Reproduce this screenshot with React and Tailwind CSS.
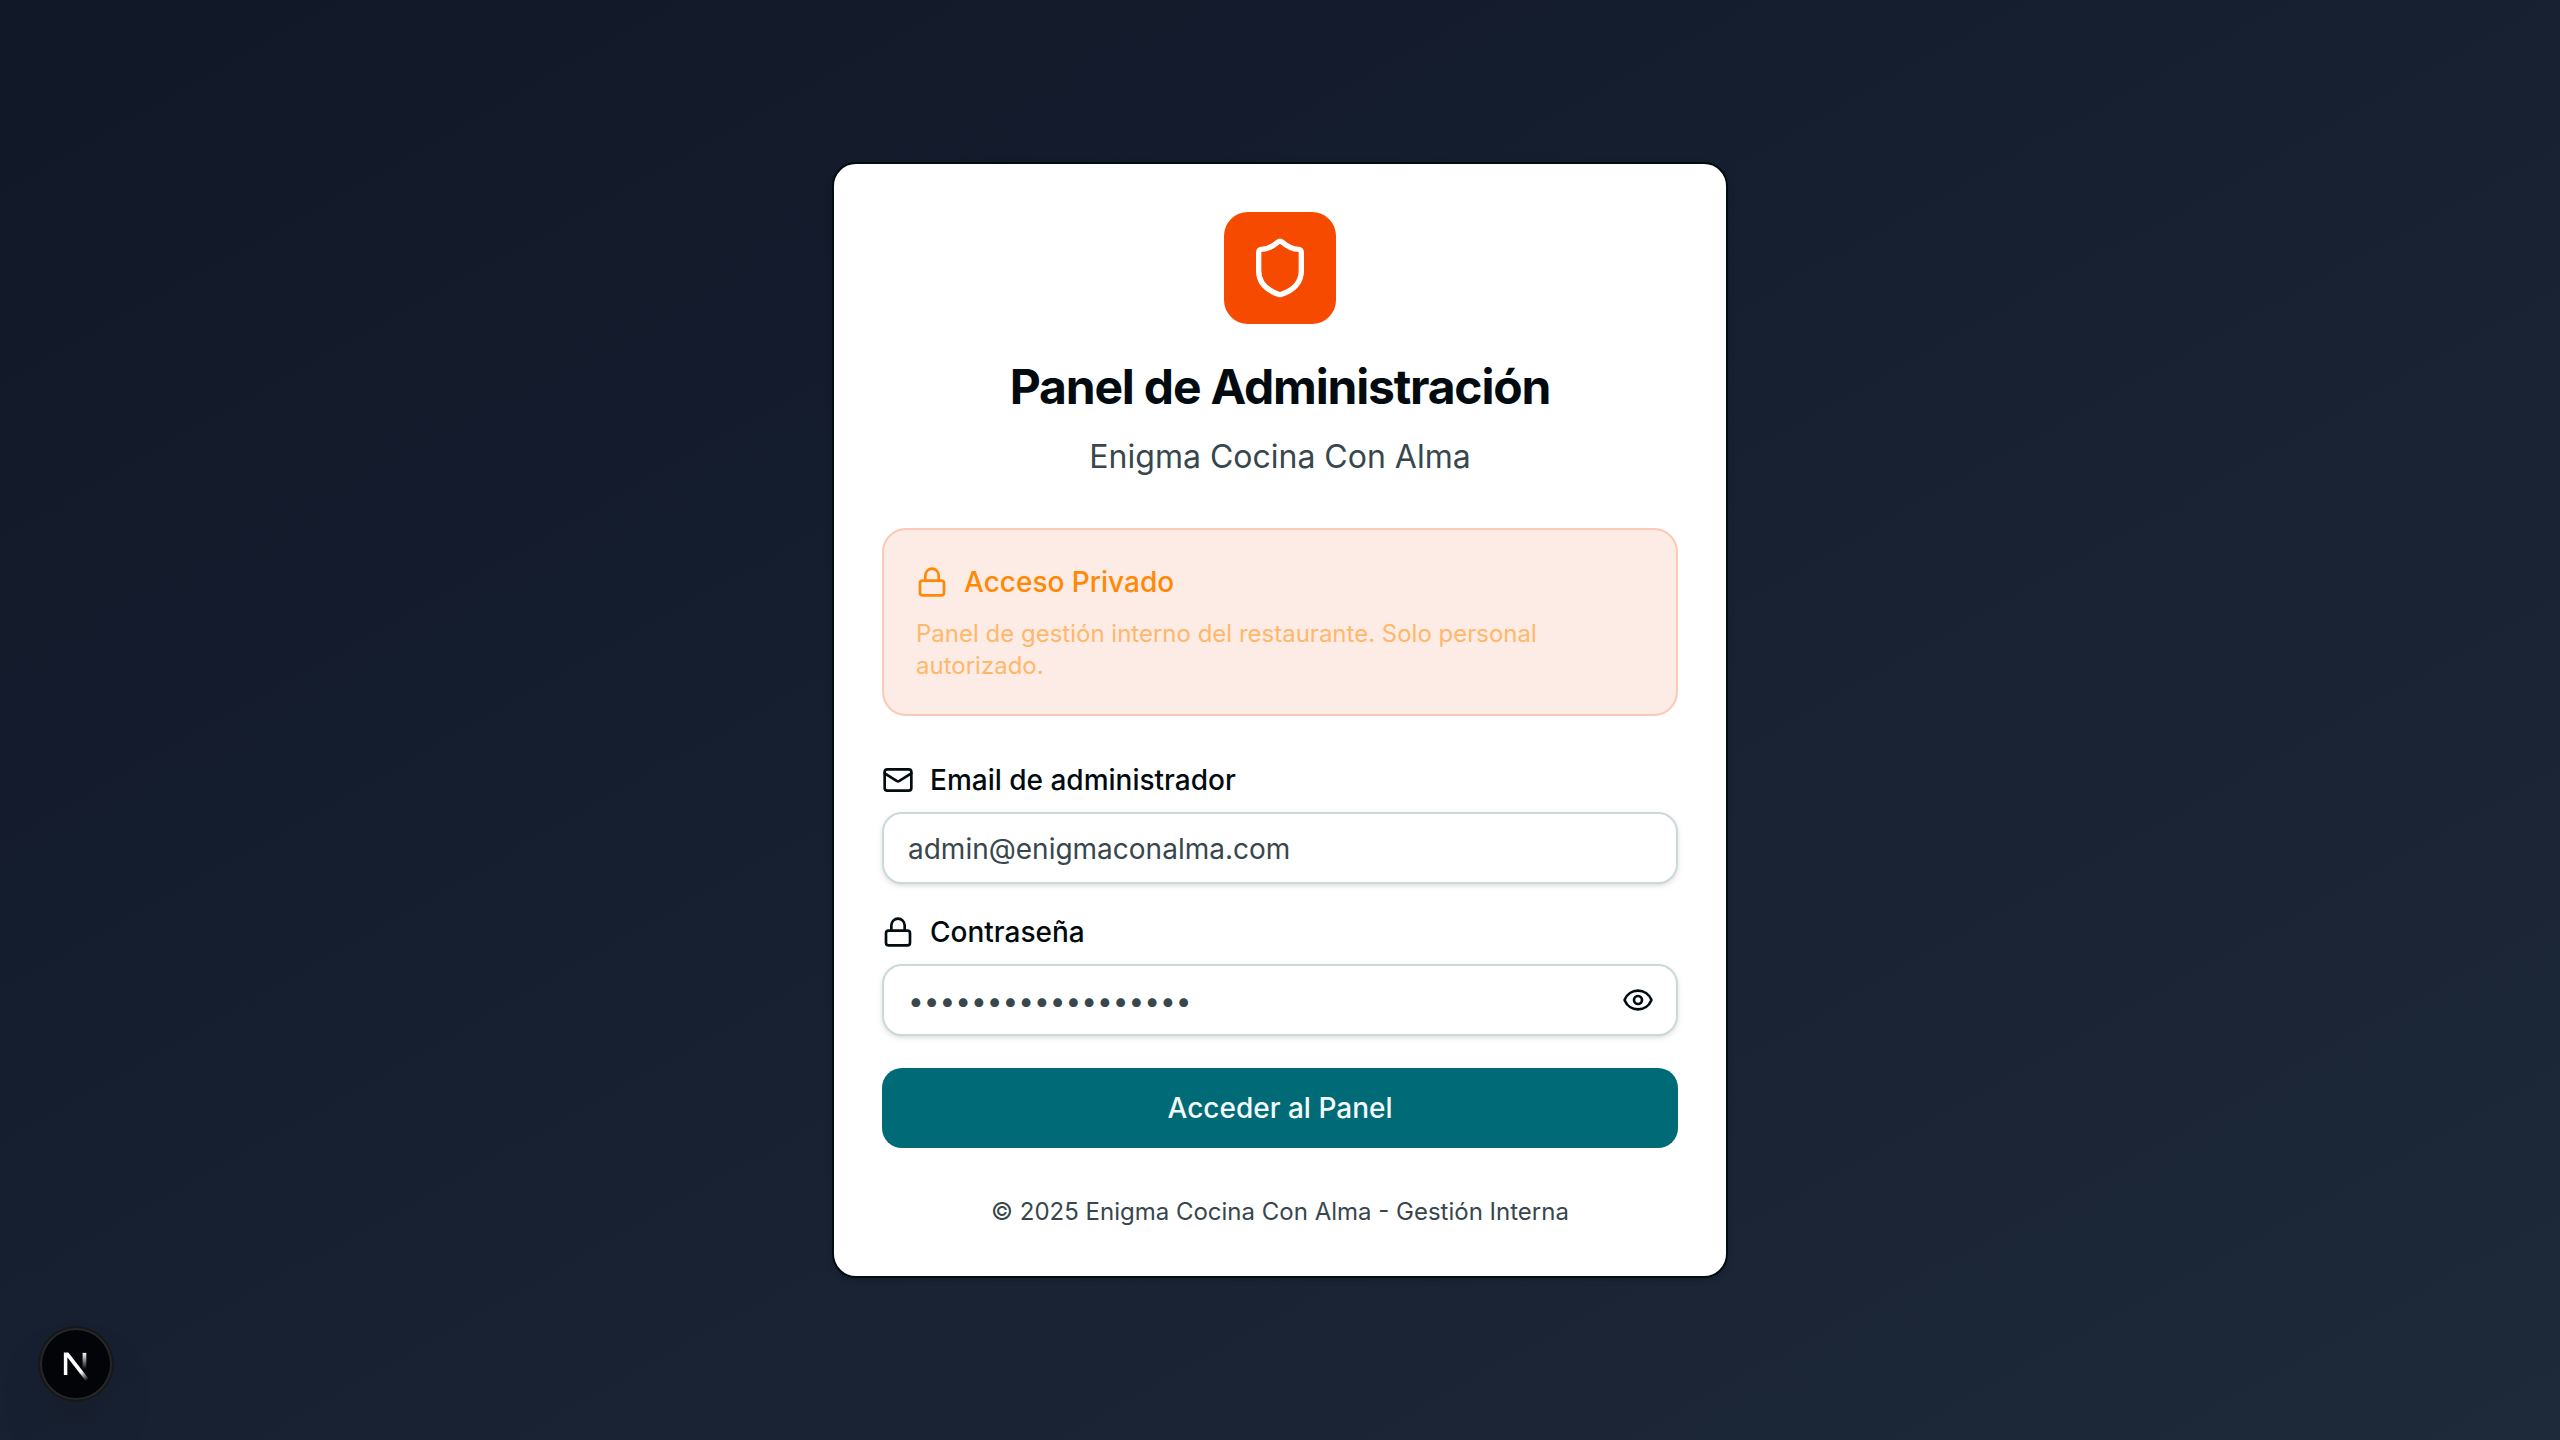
import { useState } from "react";
import { Eye, EyeOff, Lock, Mail, Shield } from "lucide-react";

function Field({ id, icon: Icon, label, children, ...input }) {
  return (
    <div className="flex flex-col gap-4">
      <label htmlFor={id} className="flex h-8 items-center gap-4 text-[28px] leading-8 font-medium text-[#020b10]">
        <Icon className="size-8" />
        {label}
      </label>
      <div className="relative">
        <input
          id={id}
          className="block h-18 w-full rounded-[20px] border-2 border-[#cbd9db] bg-white px-6 pt-0.5 text-[28px] leading-10 text-[#37474d] shadow-[0_2px_6px_rgba(0,0,0,0.1),0_2px_4px_-2px_rgba(0,0,0,0.1)] outline-none"
          {...input}
        />
        {children}
      </div>
    </div>
  );
}

function DevBadge() {
  return (
    <div className="fixed bottom-10 left-10 size-18 rounded-full bg-[#030408] shadow-[0_0_0_2px_#171717,inset_0_0_0_2px_rgba(255,255,255,0.14),0_32px_64px_-16px_rgba(0,0,0,0.24)]">
      <svg className="size-18" viewBox="0 0 36 36" fill="none">
        <defs>
          <linearGradient id="diagonal" x1="9.95555" y1="11.1226" x2="15.4778" y2="17.9671" gradientUnits="userSpaceOnUse">
            <stop stopColor="white" />
            <stop offset="0.604072" stopColor="white" stopOpacity="0" />
            <stop offset="1" stopColor="white" stopOpacity="0" />
          </linearGradient>
          <linearGradient id="bar" x1="11.8222" y1="1.40039" x2="11.791" y2="9.62542" gradientUnits="userSpaceOnUse">
            <stop stopColor="white" />
            <stop offset="1" stopColor="white" stopOpacity="0" />
          </linearGradient>
          <clipPath id="mark">
            <rect x="1.4" y="1.4" width="16" height="16" />
          </clipPath>
        </defs>
        <g transform="translate(10.4 10.9)" clipPath="url(#mark)" strokeWidth="1.86">
          <path d="M13.3 15.2 L2.34 1 V12.6" stroke="url(#diagonal)" />
          <path d="M11.825 1.5 V13.1" stroke="url(#bar)" />
        </g>
      </svg>
    </div>
  );
}

export default function App() {
  const [email, setEmail] = useState("admin@enigmaconalma.com");
  const [password, setPassword] = useState("administrador-2025");
  const [visible, setVisible] = useState(false);
  const Toggle = visible ? EyeOff : Eye;

  return (
    <div className="flex min-h-screen items-center justify-center bg-linear-to-br from-gray-900 to-gray-800 font-['Inter',sans-serif]">
      <main className="w-[896px] rounded-3xl border-2 border-[#020b10] bg-white p-12 shadow-[0_2px_6px_rgba(0,0,0,0.1),0_2px_4px_-2px_rgba(0,0,0,0.1)]">
        <header className="flex flex-col items-center text-center">
          <div className="mb-[33px] flex size-28 items-center justify-center rounded-3xl bg-[#f54a00]">
            <Shield className="size-16 text-white" />
          </div>
          <h1 className="text-5xl leading-[60px] font-bold tracking-tight text-[#020b10]">Panel de Administración</h1>
          <p className="mt-4 text-[32px] leading-[48px] text-[#37474d]">Enigma Cocina Con Alma</p>
        </header>

        <section className="mt-[47px] rounded-3xl border-2 border-[#fbc9b6] bg-[#fdebe5] p-8">
          <div className="flex items-center gap-4 text-[#ff8904]">
            <Lock className="size-8" />
            <span className="text-[28px] leading-10 font-medium">Acceso Privado</span>
          </div>
          <p className="mt-4 text-2xl leading-8 text-[#ffb86a]">
            Panel de gestión interno del restaurante. Solo personal autorizado.
          </p>
        </section>

        <form className="mt-12 flex flex-col gap-8" onSubmit={(e) => e.preventDefault()}>
          <Field id="email" type="email" icon={Mail} label="Email de administrador" value={email} onChange={(e) => setEmail(e.target.value)} />
          <Field
            id="password"
            type={visible ? "text" : "password"}
            icon={Lock}
            label="Contraseña"
            value={password}
            onChange={(e) => setPassword(e.target.value)}
          >
            <button type="button" onClick={() => setVisible(!visible)} className="absolute inset-y-0 right-0 flex items-center px-6 text-[#020b10]">
              <Toggle className="size-8" />
            </button>
          </Field>
          <button type="submit" className="h-20 rounded-[20px] bg-[#006a76] text-[28px] leading-10 font-medium text-[#f3fbfc]">
            Acceder al Panel
          </button>
        </form>

        <p className="mt-12 text-center text-2xl leading-8 text-[#37474d]">© 2025 Enigma Cocina Con Alma - Gestión Interna</p>
      </main>
      <DevBadge />
    </div>
  );
}
